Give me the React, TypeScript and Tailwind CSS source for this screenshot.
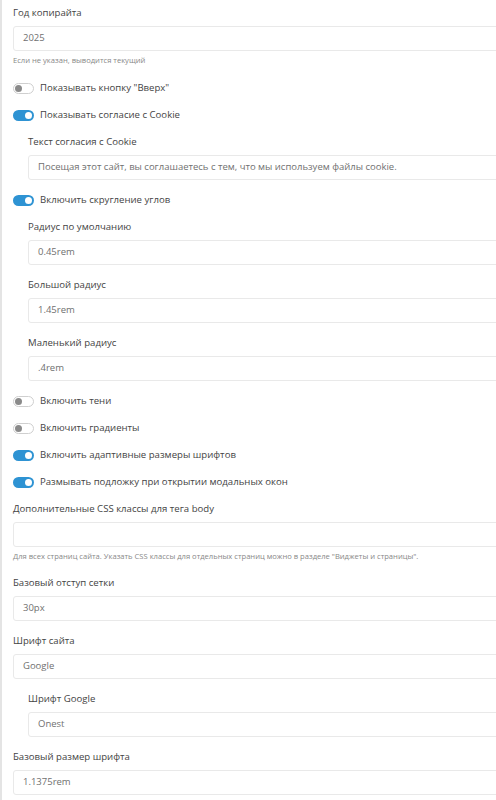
import React from 'react';

const Toggle = ({ on, label }: { on: boolean; label: string }) => (
  <div className="flex items-center h-[14px] mb-[13px]">
    {on ? (
      <span className="relative inline-block w-[21px] h-[11px] rounded-full bg-[#2e93d3]">
        <span className="absolute right-[2px] top-[2px] w-[7px] h-[7px] rounded-full bg-white" />
      </span>
    ) : (
      <span className="relative inline-block w-[21px] h-[11px] rounded-full bg-white border border-[#cfcfcf]">
        <span className="absolute left-[1px] top-[1px] w-[7px] h-[7px] rounded-full bg-[#8a8a8a]" />
      </span>
    )}
    <span className="ml-[6px] text-[9.6px] text-[#444]">{label}</span>
  </div>
);

const Field = ({
  label,
  value,
  hint,
  nested,
}: {
  label: string;
  value: string;
  hint?: string;
  nested?: boolean;
}) => (
  <div className={nested ? 'pl-[15px]' : ''}>
    <div className="h-[14px] leading-[14px] text-[9.6px] text-[#444] mb-[6px]">{label}</div>
    <div className="h-[25px] w-[560px] border border-[#e9e9e9] rounded-[3px] bg-white flex items-center px-[9px] text-[9.5px] text-[#707070]">
      {value}
    </div>
    {hint ? (
      <div className="mt-[4px] mb-[15px] h-[10px] leading-[10px] text-[7.6px] text-[#888]">{hint}</div>
    ) : (
      <div className="h-[13px]" />
    )}
  </div>
);

export default function App() {
  return (
    <div
      className="w-[496px] h-[800px] overflow-hidden bg-white border-l-2 border-[#e4e4e4]"
      style={{ fontFamily: '"Open Sans", "Noto Sans", sans-serif' }}
    >
      <div className="pl-[11px] pt-[6px]">
        <Field label="Год копирайта" value="2025" hint="Если не указан, выводится текущий" />
        <div className="h-[1px]" />
        <Toggle on={false} label={'Показывать кнопку "Вверх"'} />
        <Toggle on={true} label="Показывать согласие с Cookie" />
        <Field
          nested
          label="Текст согласия с Cookie"
          value="Посещая этот сайт, вы соглашаетесь с тем, что мы используем файлы cookie."
        />
        <Toggle on={true} label="Включить скругление углов" />
        <Field nested label="Радиус по умолчанию" value="0.45rem" />
        <Field nested label="Большой радиус" value="1.45rem" />
        <Field nested label="Маленький радиус" value=".4rem" />
        <Toggle on={false} label="Включить тени" />
        <Toggle on={false} label="Включить градиенты" />
        <Toggle on={true} label="Включить адаптивные размеры шрифтов" />
        <Toggle on={true} label="Размывать подложку при открытии модальных окон" />
        <Field
          label="Дополнительные CSS классы для тега body"
          value=""
          hint={'Для всех страниц сайта. Указать CSS классы для отдельных страниц можно в разделе "Виджеты и страницы".'}
        />
        <Field label="Базовый отступ сетки" value="30px" />
        <Field label="Шрифт сайта" value="Google" />
        <Field nested label="Шрифт Google" value="Onest" />
        <Field label="Базовый размер шрифта" value="1.1375rem" />
      </div>
    </div>
  );
}
